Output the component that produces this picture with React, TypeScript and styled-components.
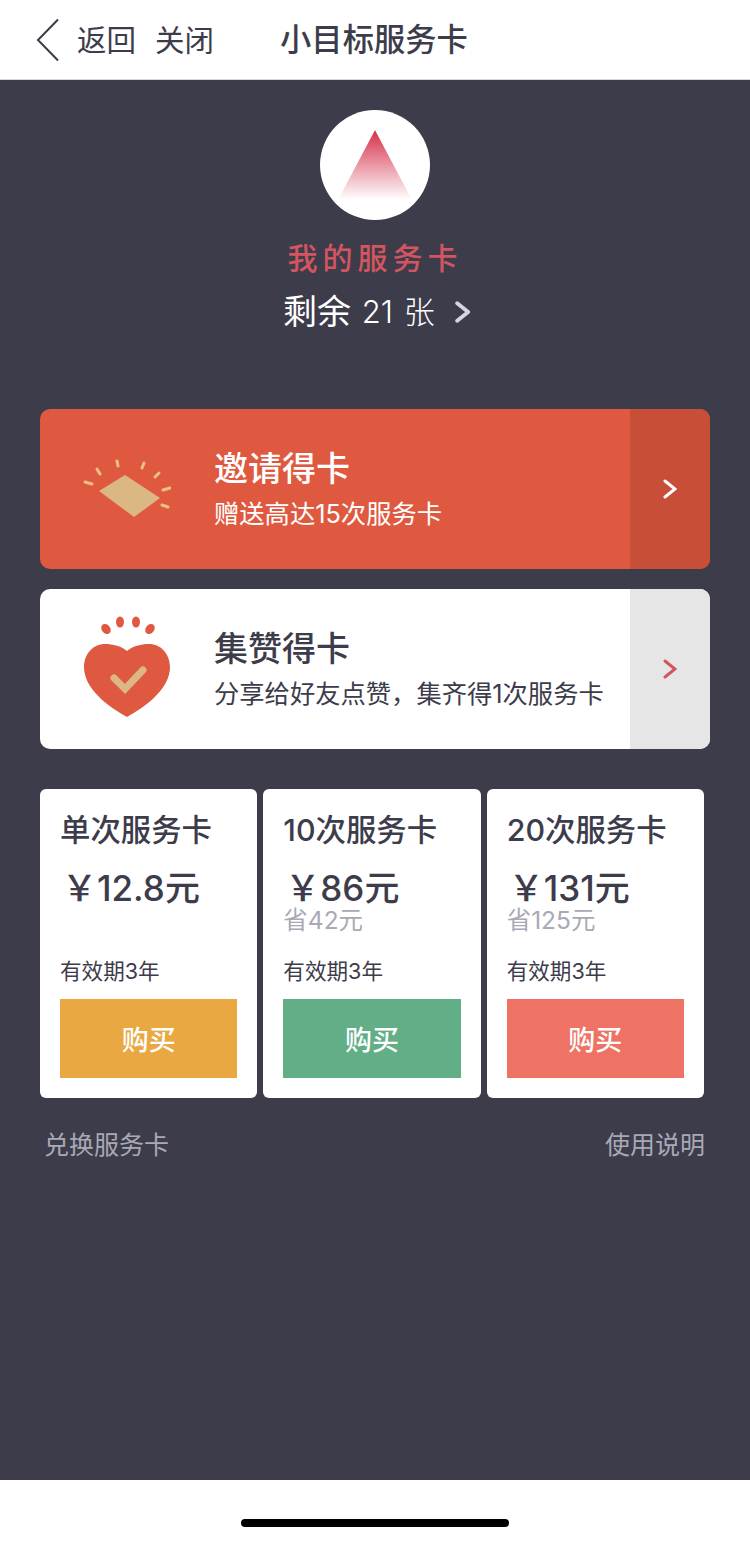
import * as React from 'react'
import styled, {createGlobalStyle} from 'styled-components'

const GlobalStyle = createGlobalStyle`
  html, body {
    margin: 0;
    padding: 0;
    background: #fff;
    font-family: Inter, "Noto Sans CJK SC", sans-serif;
  }
  * {
    box-sizing: border-box;
  }
`

const Page = styled.div`
  width: 750px;
  height: 1542px;
  display: flex;
  flex-direction: column;
`

const Header = styled.header`
  height: 80px;
  flex: none;
  display: flex;
  align-items: center;
  padding-left: 36px;
  background: #fff;
  color: #3d3c4b;
  border-bottom: 1px solid #d8d8dc;
`

const NavLink = styled.span`
  font-size: 29.5px;
  line-height: 40px;
  margin-left: 19px;
  &:first-of-type {
    margin-left: 17px;
  }
`

const Title = styled.h1`
  margin: 0 0 0 66px;
  font-size: 31.3px;
  line-height: 40px;
  font-weight: 500;
`

const Main = styled.main`
  flex: 1;
  background: #3d3c4b;
  padding: 30px 40px 0;
  display: flex;
  flex-direction: column;
`

const Hero = styled.section`
  display: flex;
  flex-direction: column;
  align-items: center;
  margin-bottom: 75px;
`

const Avatar = styled.div`
  width: 110px;
  height: 110px;
  border-radius: 50%;
  background: #fff;
  display: flex;
  align-items: center;
  justify-content: center;
`

const HeroTitle = styled.div`
  margin-top: 17px;
  color: #d2555f;
  font-size: 30px;
  line-height: 42px;
  font-weight: 500;
  letter-spacing: 5px;
`

const Remain = styled.div`
  margin-top: 11px;
  margin-left: 3px;
  display: flex;
  align-items: center;
  color: #fff;
  font-size: 31px;
  font-weight: 300;
  line-height: 44px;
  white-space: pre;
  word-spacing: 2px;
  b {
    font-size: 34px;
    font-weight: 400;
  }
  svg {
    margin-left: 20px;
  }
`

const Promo = styled.div<{$light?: boolean}>`
  height: 160px;
  margin-bottom: 20px;
  display: flex;
  align-items: stretch;
  border-radius: 10px;
  overflow: hidden;
  background: ${(p) => (p.$light ? '#fff' : '#df5940')};
  color: ${(p) => (p.$light ? '#3d3c4b' : '#fff')};
`

const PromoIcon = styled.div`
  width: 175px;
  flex: none;
  display: flex;
  align-items: center;
  padding-left: 43px;
`

const PromoBody = styled.div`
  flex: 1;
  display: flex;
  flex-direction: column;
  justify-content: center;
  margin-left: -1px;
  padding-bottom: 2px;
`

const PromoTitle = styled.div`
  font-size: 34px;
  line-height: 44px;
  font-weight: 500;
`

const PromoText = styled.div`
  margin-top: 7px;
  font-size: 25.3px;
  line-height: 32px;
  white-space: nowrap;
`

const PromoArrow = styled.div<{$light?: boolean}>`
  width: 80px;
  flex: none;
  display: flex;
  align-items: center;
  justify-content: center;
  background: ${(p) => (p.$light ? '#e6e6e6' : '#c94e38')};
`

const Plans = styled.div`
  width: 664px;
  margin-top: 20px;
  display: grid;
  grid-template-columns: repeat(3, 1fr);
  gap: 6px;
`

const Plan = styled.div`
  height: 309px;
  padding: 20px;
  border-radius: 6px;
  background: #fff;
  color: #3d3c4b;
  display: flex;
  flex-direction: column;
`

const PlanName = styled.div`
  font-size: 30.4px;
  line-height: 42px;
  font-weight: 500;
  white-space: nowrap;
`

const Price = styled.div`
  margin-top: 16px;
  padding-left: 2px;
  font-size: 35px;
  line-height: 42px;
  font-weight: 500;
  white-space: nowrap;
`

const Saving = styled.div`
  height: 24px;
  margin-top: -1px;
  color: #a9a9b6;
  font-size: 24.5px;
  line-height: 24px;
`

const Validity = styled.div`
  margin-top: auto;
  font-size: 21.6px;
  line-height: 30px;
`

const BuyButton = styled.div<{$color: string}>`
  height: 79px;
  margin-top: 13px;
  flex: none;
  display: flex;
  align-items: center;
  justify-content: center;
  background: ${(p) => p.$color};
  color: #fff;
  font-size: 27px;
  font-weight: 500;
`

const Links = styled.div`
  margin-top: 30px;
  padding: 0 5px 0 4px;
  display: flex;
  justify-content: space-between;
  color: #a9a9b6;
  font-size: 25px;
  line-height: 34px;
`

const Footer = styled.footer`
  height: 62px;
  flex: none;
  background: #fff;
  display: flex;
  justify-content: center;
  align-items: flex-end;
  padding-bottom: 15px;
`

const HomeBar = styled.div`
  width: 268px;
  height: 8px;
  border-radius: 4px;
  background: #000;
`

const Chevron = ({color, size = 20, width = 3}: {color: string; size?: number; width?: number}) => (
  <svg width={size * 0.7} height={size} viewBox="0 0 14 20" fill="none">
    <path d="M2 2 L12 10 L2 18" stroke={color} strokeWidth={width} strokeLinecap="round" strokeLinejoin="miter" />
  </svg>
)

const BackIcon = () => (
  <svg width="24" height="44" viewBox="0 0 24 44" fill="none">
    <path d="M22 1.5 L2 22 L22 42.5" stroke="#3d3c4b" strokeWidth="2" />
  </svg>
)

const PeakIcon = () => (
  <svg width="76" height="72" viewBox="0 0 76 72">
    <defs>
      <linearGradient id="peak" x1="0" y1="0" x2="0" y2="1">
        <stop offset="0" stopColor="#d5304a" />
        <stop offset="1" stopColor="#d5304a" stopOpacity="0" />
      </linearGradient>
    </defs>
    <polygon points="38,1 75,71 1,71" fill="url(#peak)" />
  </svg>
)

const GiftIcon = () => (
  <svg width="88" height="62" viewBox="0 0 88 62">
    <polygon points="42,17 77,40 51,59 16,33" fill="#dbb883" />
    <g stroke="#eec07f" strokeWidth="3" strokeLinecap="round">
      <line x1="2" y1="24" x2="9" y2="26" />
      <line x1="14" y1="11" x2="17" y2="16" />
      <line x1="34" y1="3" x2="35" y2="8" />
      <line x1="61" y1="5" x2="59" y2="10" />
      <line x1="76" y1="15" x2="72" y2="19" />
      <line x1="87" y1="30" x2="80" y2="32" />
      <line x1="85" y1="49" x2="79" y2="47" />
    </g>
  </svg>
)

const HeartIcon = () => (
  <svg width="88" height="106" viewBox="0 0 88 106">
    <g fill="#df5940">
      <ellipse cx="23" cy="13" rx="4.2" ry="5.5" transform="rotate(-40 23 13)" />
      <ellipse cx="37" cy="6" rx="4" ry="5.5" />
      <ellipse cx="53" cy="6" rx="4" ry="5.5" />
      <ellipse cx="67" cy="13" rx="4.2" ry="5.5" transform="rotate(40 67 13)" />
      <path d="M44 35 C38 30 30 28 22 28 C10 28 1 38 1 51 C1 72 24 90 44 101 C64 90 87 72 87 51 C87 38 78 28 66 28 C58 28 50 30 44 35 Z" />
    </g>
    <path d="M31 62 L42 73 L60 54" fill="none" stroke="#dbb883" strokeWidth="7" strokeLinecap="round" />
  </svg>
)

const plans = [
  {name: '单次服务卡', price: '12.8', saving: '', color: '#e9a842'},
  {name: '10次服务卡', price: '86', saving: '省42元', color: '#62ae87'},
  {name: '20次服务卡', price: '131', saving: '省125元', color: '#ee7365'},
]

const App: React.FC = () => {
  return (
    <Page>
      <GlobalStyle />
      <Header>
        <BackIcon />
        <NavLink>返回</NavLink>
        <NavLink>关闭</NavLink>
        <Title>小目标服务卡</Title>
      </Header>
      <Main>
        <Hero>
          <Avatar>
            <PeakIcon />
          </Avatar>
          <HeroTitle>我的服务卡</HeroTitle>
          <Remain>
            <b>剩余</b> 21 张
            <Chevron color="#d5d4e2" size={22} width={3.5} />
          </Remain>
        </Hero>
        <Promo>
          <PromoIcon>
            <GiftIcon />
          </PromoIcon>
          <PromoBody>
            <PromoTitle>邀请得卡</PromoTitle>
            <PromoText>赠送高达15次服务卡</PromoText>
          </PromoBody>
          <PromoArrow>
            <Chevron color="#fff" />
          </PromoArrow>
        </Promo>
        <Promo $light>
          <PromoIcon>
            <HeartIcon />
          </PromoIcon>
          <PromoBody>
            <PromoTitle>集赞得卡</PromoTitle>
            <PromoText>分享给好友点赞，集齐得1次服务卡</PromoText>
          </PromoBody>
          <PromoArrow $light>
            <Chevron color="#d2555f" />
          </PromoArrow>
        </Promo>
        <Plans>
          {plans.map((plan) => (
            <Plan key={plan.name}>
              <PlanName>{plan.name}</PlanName>
              <Price>￥{plan.price}元</Price>
              <Saving>{plan.saving}</Saving>
              <Validity>有效期3年</Validity>
              <BuyButton $color={plan.color}>购买</BuyButton>
            </Plan>
          ))}
        </Plans>
        <Links>
          <span>兑换服务卡</span>
          <span>使用说明</span>
        </Links>
      </Main>
      <Footer>
        <HomeBar />
      </Footer>
    </Page>
  )
}

export default App
